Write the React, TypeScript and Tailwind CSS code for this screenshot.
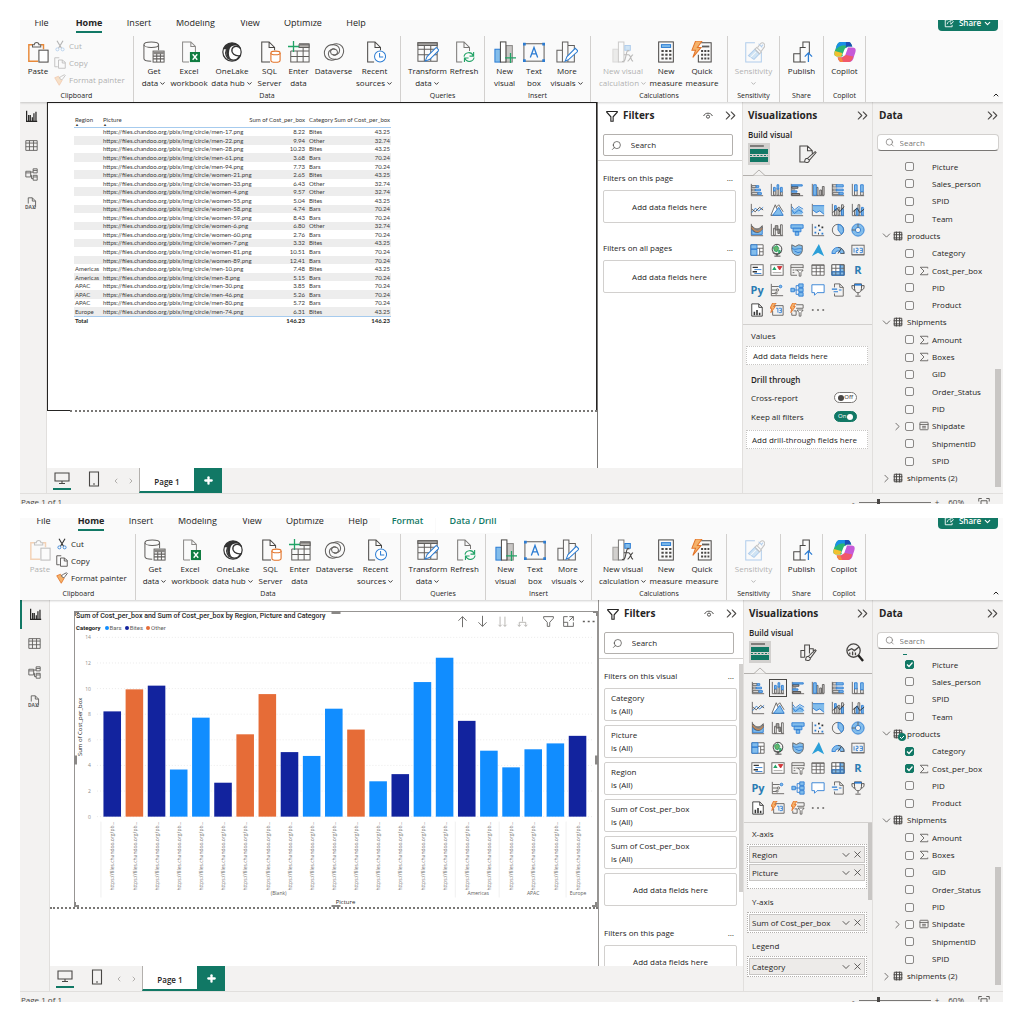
import React, { useState } from "react";
import { ChevronDown, ChevronRight, ChevronUp, ChevronsRight, Plus, Search, X } from "lucide-react";

const G = "#605e5c";
const B = "#2b7cd3";
const L = "#83bdeb";
const O = "#e8893a";
const N = "#21a366";

type IconProps = { children: React.ReactNode; className?: string; box?: number; sw?: number };
function Svg({ children, className = "size-[22px]", box = 24, sw = 1.1 }: IconProps) {
  return (
    <svg
      viewBox={`0 0 ${box} ${box}`}
      className={`block shrink-0 ${className}`}
      fill="none"
      stroke={G}
      strokeWidth={sw}
      aria-hidden="true"
    >
      {children}
    </svg>
  );
}

/* ---------- ribbon icons ---------- */

const ribbonIcons: Record<string, React.ReactNode> = {
  paste: (
    <>
      <path d="M7 4H2v18h10M15 4h3v5" stroke={O} strokeWidth="1.6" />
      <path d="M6 6.500V4h2c0-3 5-3 5 0h2v2.500z" fill="#fafafa" />
      <rect x="13" y="10" width="10" height="13" fill="#fff" stroke="#494745" />
    </>
  ),
  getData: (
    <>
      <ellipse cx="9" cy="4" rx="8" ry="3" />
      <path d="M1 4v15c0 2 4 3 8 3M17 4v6" />
      <rect x="11" y="11" width="12" height="12" fill="#fff" />
      <path d="M11 13h12" strokeWidth="3" stroke="#8a8886" />
      <path d="M11 16.500h12M11 19.500h12M15 14v9M19 14v9" />
    </>
  ),
  excel: (
    <>
      <path d="M5 23V1h9l5 5v6M14 1v5h5M5 23h7" stroke="#8a8886" />
      <rect x="13" y="12" width="11" height="11" fill="#107c41" stroke="none" />
      <path d="M16 14.500l5 6M21 14.500l-5 6" stroke="#fff" strokeWidth="1.500" />
    </>
  ),
  onelake: (
    <>
      <circle cx="12" cy="12" r="10" fill="#fff" stroke="#333" strokeWidth="1.300" />
      <path d="M2.500 9C5 1 17 0 20 6c-5-2-10-1-11 4-1 5 0 8 2 10C6 19 5 13 6 9z" fill="#333" stroke="none" />
      <path d="M21 8c-2-3-8-3-9 1-1 4 3 8 9 7M6 9c-2 5 0 10 4 11 4 2 8 0 10-3" stroke="#333" strokeWidth="1.400" />
    </>
  ),
  sql: (
    <>
      <path d="M12 23H3V1h8l6 6v3M11 1v6h6" stroke="#494745" />
      <path d="M13 13v8c0 3 10 3 10 0v-8" fill="#fff" stroke="#e3742a" strokeWidth="1.200" />
      <ellipse cx="18" cy="13" rx="5" ry="2" fill="#fff" stroke="#e3742a" strokeWidth="1.200" />
    </>
  ),
  enter: (
    <>
      <path d="M12 3h11v20H3V11M3 11h20M3 17h20M10 11v12M16.500 4v19" />
      <path d="M12 4h11v3H12z" fill="#b3b0ad" />
      <path d="M6 0v12M0 6h12" stroke={N} strokeWidth="1.400" />
    </>
  ),
  dataverse: (
    <>
      <path d="M14 20C4 24-1 15 3 8 7 2 17 3 18 9c1 5-5 8-9 5-2-3 1-7 4-5" />
      <path d="M10 4c10-4 15 5 11 12-4 6-14 5-15-1-1-5 5-8 9-5 2 3-1 7-4 5" />
    </>
  ),
  recent: (
    <>
      <path d="M11 23H4V1h8l6 6v3M12 1v6h6" stroke="#494745" />
      <circle cx="17.500" cy="17" r="6" stroke={B} fill="#fff" />
      <path d="M17 13v4.500h4" stroke={B} />
    </>
  ),
  transform: (
    <>
      <path d="M1 2h21v20H1zM1 9h21M1 15h21M8 5v17M15 5v17" />
      <path d="M1 2h21v3H1z" fill="#a19f9d" />
      <path d="M9 22l2-5L21 7l3 3-10 10z" fill="#fff" stroke={B} />
    </>
  ),
  refresh: (
    <>
      <path d="M10 23H4V1h8l6 6v4M12 1v6h6" stroke="#797775" />
      <path d="M12 17c1-5 8-6 10-1M22.500 12v4.500H18M23 18c-1 5-8 6-10 1M12.500 23v-4.500H17" stroke={N} strokeWidth="1.200" />
    </>
  ),
  newVisual: (
    <>
      <rect x="1" y="9" width="6" height="14" fill={L} stroke={B} />
      <rect x="13" y="5" width="7" height="18" fill="#c8c6c4" stroke="#8a8886" />
      <rect x="7" y="1" width="6" height="22" fill="#fff" stroke="#494745" />
      <path d="M18 13v11M12 18.500h12" stroke={N} strokeWidth="1.400" />
    </>
  ),
  textBox: (
    <>
      <rect x="1" y="3" width="22" height="19" />
      <path d="M0 2h3v3H0zM21 2h3v3h-3zM0 20h3v3H0zM21 20h3v3h-3z" fill={B} stroke="none" />
      <path d="M8 18l4-11 4 11M9.500 14h5" stroke={B} strokeWidth="1.400" />
    </>
  ),
  moreVisuals: (
    <>
      <path d="M1 10h6v13H1zM7 1h6v22H7zM13 5h7v18h-7" />
      <path d="M10 22l2-5L21 8l3 3-10 9z" fill="#fff" stroke={B} />
    </>
  ),
  calc: (
    <>
      <path d="M1 9h6v14H1z" fill="#d2d0ce" stroke="#a19f9d" />
      <path d="M7 1h6v22H7z" fill="#fff" stroke="#797775" />
      <path d="M14 5h6v5h-6z" fill={L} stroke={B} />
      <path d="M19 11c-3-2-3 2-4 6-1 5-2 6-4 5M13 15h5M18 15c3 0 2 7 5 7M23 15c-2 0-4 7-6 7" stroke="#494745" strokeWidth="1.200" />
    </>
  ),
  measure: (
    <>
      <rect x="4" y="1" width="16" height="22" stroke="#494745" />
      <rect x="7" y="4" width="10" height="3" fill={L} stroke={B} />
      <path d="M7 11h11M7 15h11M7 19h11" strokeDasharray="2.500 1.700" strokeWidth="2.200" stroke="#494745" />
    </>
  ),
  quick: (
    <>
      <path d="M11 2h11v21H8v-8" stroke="#494745" />
      <path d="M12 6h8" strokeWidth="2" />
      <path d="M11 11h9M11 15h9M11 19h9" strokeDasharray="2.200 1.300" strokeWidth="2.200" stroke="#494745" />
      <path d="M5 0L1 10h4l-3 8 9-11H7l5-7z" fill="#f5b26a" stroke="#e3742a" />
    </>
  ),
  sensitivity: (
    <>
      <path d="M13 2H3v21h17V12" stroke={B} />
      <path d="M6 16l7-7 5 5-6 6z" fill={L} stroke={B} />
      <path d="M8 18l6-6" stroke="#fff" />
      <path d="M13 9l5 5 2-2-5-5zM16 7l3-4c3-3 6 1 4 4l-3 4" stroke={G} />
      <path d="M17 3l4 4M20 6l2-2" stroke={B} />
    </>
  ),
  publish: (
    <>
      <path d="M3 23V14h7v9zM10 14V7h6M10 7h3V1h7v13M10 23h6" stroke="#494745" />
      <path d="M19 23V13M15 17l4-4 4 4" stroke={B} strokeWidth="1.400" />
    </>
  ),
  copilot: (
    <g stroke="none">
      <path d="M8 1h8c2 0 3 2 4 5h-4c-2 0-3 1-4 4l-3 7H4c-5 0-4-4-2-9C3 3 5 1 8 1z" fill="#2bb673" />
      <path d="M8 1h7c2 0 3 2 3 4H9C5 6 4 8 2 9 3 3 5 1 8 1z" fill="#1a8fe8" />
      <path d="M13 1h3c2 0 3 2 4 5h-4c-1 0-2 0-3 2z" fill="#1d4fb8" />
      <path d="M4 17c-4 0-4-3-3-6l8 2-1 4z" fill="#f2c12e" />
      <path d="M16 23H8c-2 0-3-2-4-5h4c2 0 3-1 4-4l3-7h5c5 0 4 4 2 9-1 5-3 7-6 7z" fill="#c65ad8" />
      <path d="M16 23H8c-2 0-3-2-4-5h4c2 0 3-1 4-3l9 2c-1 4-3 6-5 6z" fill="#f1586a" />
      <path d="M10 23H8c-2 0-3-2-4-5h4z" fill="#f58a3c" />
      <path d="M9 15l3-7h3l-3 8z" fill="#fff" />
    </g>
  ),
};

type Btn = { icon: string; lines: string[]; menu?: boolean; w: string; off?: boolean };
type Group = { name: string; w: string; items: Btn[] };

function RibbonButton({ icon, lines, menu, w, off }: Btn) {
  return (
    <button type="button" disabled={off} className={`flex shrink-0 flex-col items-center ${w} ${off ? "opacity-35" : ""}`}>
      <Svg>{ribbonIcons[icon]}</Svg>
      <span className="mt-[2px] flex flex-col items-center text-[8px] leading-[12px] whitespace-nowrap">
        {lines.map((line, i) => (
          <span key={i} className="flex items-center">
            {line}
            {menu && i === lines.length - 1 && (
              <ChevronDown className={`size-[7px] ${line ? "ml-px" : "mt-[3px]"}`} strokeWidth={3} />
            )}
          </span>
        ))}
      </span>
    </button>
  );
}

function ribbonGroups(selected: boolean): Group[] {
  return [
    {
      name: "Data",
      w: selected ? "w-[265px]" : "w-[267px]",
      items: [
        { icon: "getData", lines: ["Get", "data"], menu: true, w: "w-[32px]" },
        { icon: "excel", lines: ["Excel", "workbook"], w: "w-[38px]" },
        { icon: "onelake", lines: ["OneLake", "data hub"], menu: true, w: "w-[48px]" },
        { icon: "sql", lines: ["SQL", "Server"], w: "w-[27px]" },
        { icon: "enter", lines: ["Enter", "data"], w: "w-[31px]" },
        { icon: "dataverse", lines: ["Dataverse"], w: "w-[39px]" },
        { icon: "recent", lines: ["Recent", "sources"], menu: true, w: "w-[43px]" },
      ],
    },
    {
      name: "Queries",
      w: selected ? "w-[85px]" : "w-[84px]",
      items: [
        { icon: "transform", lines: ["Transform", "data"], menu: true, w: "w-[43px]" },
        { icon: "refresh", lines: ["Refresh"], w: "w-[30px]" },
      ],
    },
    {
      name: "Insert",
      w: "w-[106px]",
      items: [
        { icon: "newVisual", lines: ["New", "visual"], w: "w-[30px]" },
        { icon: "textBox", lines: ["Text", "box"], w: "w-[29px]" },
        { icon: "moreVisuals", lines: ["More", "visuals"], menu: true, w: "w-[37px]" },
      ],
    },
    {
      name: "Calculations",
      w: selected ? "w-[135px]" : "w-[137px]",
      items: [
        { icon: "calc", lines: ["New visual", "calculation"], menu: true, w: "w-[50px]", off: !selected },
        { icon: "measure", lines: ["New", "measure"], w: "w-[36px]" },
        { icon: "quick", lines: ["Quick", "measure"], w: "w-[36px]" },
      ],
    },
    {
      name: "Sensitivity",
      w: selected ? "w-[54px]" : "w-[52px]",
      items: [{ icon: "sensitivity", lines: ["Sensitivity", ""], menu: true, w: "w-[48px]", off: true }],
    },
    { name: "Share", w: selected ? "w-[42px]" : "w-[44px]", items: [{ icon: "publish", lines: ["Publish"], w: "w-[40px]" }] },
    { name: "Copilot", w: selected ? "w-[43px]" : "w-[42px]", items: [{ icon: "copilot", lines: ["Copilot"], w: "w-[40px]" }] },
  ];
}

const tabs = [
  { name: "File", w: "w-[43px]" },
  { name: "Home", w: "w-[52px]" },
  { name: "Insert", w: "w-[48px]" },
  { name: "Modeling", w: "w-[65px]" },
  { name: "View", w: "w-[44px]" },
  { name: "Optimize", w: "w-[62px]" },
  { name: "Help", w: "w-[44px]" },
];
const contextTabs = [
  { name: "Format", w: "w-[55px]" },
  { name: "Data / Drill", w: "w-[74px]" },
];

function TabStrip({ selected }: { selected: boolean }) {
  return (
    <div className={`flex h-4 overflow-hidden ${selected ? "pl-[2px]" : ""}`}>
      {tabs.map((t) => (
        <button key={t.name} type="button" className={`-mt-[5px] flex h-[18px] justify-center text-[9px] leading-[15px] ${t.w}`}>
          <span className={t.name === "Home" ? "border-b-2 border-[#117865] font-bold" : ""}>{t.name}</span>
        </button>
      ))}
      {selected &&
        contextTabs.map((t) => (
          <button
            key={t.name}
            type="button"
            className={`mr-px flex h-[15px] justify-center bg-white text-[9px] font-semibold text-[#117865] ${t.w}`}
          >
            <span className="-mt-[5px] leading-[15px]">{t.name}</span>
          </button>
        ))}
      <div className="flex-1" />
      <button
        type="button"
        className="mr-[5px] flex h-[11px] w-[60px] items-center justify-center gap-[5px] rounded-b-sm bg-[#117865] text-[8px] font-semibold text-white"
      >
        <Svg box={16} className="-mt-[6px] size-[10px]" sw={1.4}>
          <path d="M6 3H2v11h11v-3M5 10c1-4 3-5 6-5V2l4 4-4 4V7" stroke="#fff" />
        </Svg>
        <span className="-mt-[5px] leading-[12px]">Share</span>
        <ChevronDown className="-mt-[4px] -ml-[3px] size-[9px]" strokeWidth={3} />
      </button>
    </div>
  );
}

function Clipboard({ selected }: { selected: boolean }) {
  const off = selected ? "" : "opacity-35";
  return (
    <div className={`flex shrink-0 flex-col border-r border-[#d2d0ce] ${selected ? "w-[116px] pl-[2px]" : "w-[114px]"}`}>
      <div className="flex h-[55px] pl-[2px]">
        <button type="button" className={`flex w-[32px] flex-col items-center pt-[5px] ${selected ? "opacity-35" : ""}`}>
          <Svg>{ribbonIcons.paste}</Svg>
          <span className="mt-[2px] text-[8px] leading-[12px]">Paste</span>
        </button>
        <div className={`flex flex-col pt-px text-[8px] leading-[17px] whitespace-nowrap ${off}`}>
          <button type="button" className="flex items-center gap-[3px]">
            <Svg box={16} className="size-[12px]">
              <path d="M4 1l6 10M12 1L6 11" stroke="#333" strokeWidth="1.500" />
              <circle cx="4.500" cy="12.500" r="2" stroke={B} />
              <circle cx="11.500" cy="12.500" r="2" stroke={B} />
            </Svg>
            Cut
          </button>
          <button type="button" className="flex items-center gap-[3px]">
            <Svg box={16} className="size-[12px]">
              <path d="M5 13H1V1h6M6 4h5l4 3v8H6zM11 4v4h4" stroke="#494745" />
            </Svg>
            Copy
          </button>
          <button type="button" className="flex items-center gap-[3px]">
            <Svg box={16} className="size-[12px]">
              <path d="M1 5l5-2 5 5-4 7z" fill="#f5b26a" stroke="#e3742a" />
              <path d="M7 5l3-2 4-2 1 1-3 4-2 2z" fill="#fff" stroke="#494745" />
            </Svg>
            Format painter
          </button>
        </div>
      </div>
      <div className="pt-px text-center text-[7px] leading-[12px]">Clipboard</div>
    </div>
  );
}

function Ribbon({ selected }: { selected: boolean }) {
  return (
    <header className="relative z-10 bg-[#fafafa] shadow-[0_1px_2px_#00000030]">
      <TabStrip selected={selected} />
      <div className="flex h-[66px]">
        <Clipboard selected={selected} />
        {ribbonGroups(selected).map((g) => (
          <div key={g.name} className={`flex shrink-0 flex-col border-r border-[#d2d0ce] ${g.w}`}>
            <div className="flex h-[55px] justify-center pt-[5px]">
              {g.items.map((b) => (
                <RibbonButton key={b.icon} {...b} />
              ))}
            </div>
            <div className="pt-px text-center text-[7px] leading-[12px]">{g.name}</div>
          </div>
        ))}
        <div className="flex flex-1 items-end justify-end pr-[3px] pb-[3px]">
          <button type="button" aria-label="Collapse ribbon">
            <ChevronUp className="size-[8px]" strokeWidth={3} />
          </button>
        </div>
      </div>
    </header>
  );
}

/* ---------- left rail ---------- */

function Rail({ selected }: { selected: boolean }) {
  const icon = "size-[13px]";
  return (
    <nav className={`flex shrink-0 flex-col border-r border-[#e1dfdd] bg-[#f3f2f1] ${selected ? "w-[30px]" : "w-[27px]"}`}>
      <button
        type="button"
        aria-label="Report view"
        className={`flex h-[29px] items-center justify-center ${selected ? "border-l-2 border-[#117865]" : "pr-[3px]"}`}
      >
        <Svg box={16} className={icon} sw={1.5}>
          <path d="M2 1v13h13M4.500 6v8M6.500 6v8M9 9v5M11 4v10M13.500 2v12" stroke="#252423" />
        </Svg>
      </button>
      <button type="button" aria-label="Table view" className={`flex h-[29px] items-center justify-center ${selected ? "" : "pr-[3px]"}`}>
        <Svg box={16} className={icon}>
          <path d="M1 2h14v12H1zM1 5h14M1 9.500h14M5.500 2v12M10.500 2v12" />
        </Svg>
      </button>
      <button type="button" aria-label="Model view" className={`flex h-[29px] items-center justify-center ${selected ? "" : "pr-[3px]"}`}>
        <Svg box={16} className={icon}>
          <path d="M1 4h6v7H1zM1 6h6M10 1h5v5h-5zM10 3h5M10 9h5v6h-5zM10 11h5M7 5h3M7 9h1v4h2" />
        </Svg>
      </button>
      <button type="button" aria-label="DAX query view" className={`flex h-[29px] items-center justify-center ${selected ? "" : "pr-[3px]"}`}>
        <Svg box={16} className={icon}>
          <path d="M4 8V1h5l4 4v8M9 1v4h4M10 14h3" />
          <text x="0" y="14.500" fontSize="6" fontWeight="bold" fill={G} stroke="none">
            DAX
          </text>
        </Svg>
      </button>
    </nav>
  );
}

/* ---------- report data ---------- */

type Row = [region: string, file: string, cost: number, category: "Bites" | "Bars" | "Other"];
const rows: Row[] = [
  ["", "men-17", 8.22, "Bites"],
  ["", "men-22", 9.94, "Other"],
  ["", "men-28", 10.23, "Bites"],
  ["", "men-61", 3.68, "Bars"],
  ["", "men-94", 7.73, "Bars"],
  ["", "women-21", 2.65, "Bites"],
  ["", "women-33", 6.43, "Other"],
  ["", "women-4", 9.57, "Other"],
  ["", "women-55", 5.04, "Bites"],
  ["", "women-58", 4.74, "Bars"],
  ["", "women-59", 8.43, "Bars"],
  ["", "women-6", 6.8, "Other"],
  ["", "women-60", 2.76, "Bars"],
  ["", "women-7", 3.32, "Bites"],
  ["", "women-81", 10.51, "Bars"],
  ["", "women-89", 12.41, "Bars"],
  ["Americas", "men-10", 7.48, "Bites"],
  ["Americas", "men-8", 5.15, "Bars"],
  ["APAC", "men-30", 3.85, "Bars"],
  ["APAC", "men-46", 5.26, "Bars"],
  ["APAC", "men-80", 5.72, "Bars"],
  ["Europe", "men-74", 6.31, "Bites"],
];
const totals = { Bites: "43.25", Bars: "70.24", Other: "32.74" };
const colors = { Bars: "#118dff", Bites: "#12239e", Other: "#e66c37" };

function TableCanvas() {
  return (
    <div className="flex-1 bg-white">
      <div className="h-[308px] border border-[#252423] border-b-0 pt-[12px] pl-[26px]">
        <table className="h-[209px] w-[317px] table-fixed border-collapse font-[Lato,sans-serif] text-[6px] leading-[7px] whitespace-nowrap text-[#3b3a39]">
          <colgroup>
            <col className="w-[28px]" />
            <col className="w-[146px]" />
            <col className="w-[58px]" />
            <col className="w-[27px]" />
            <col className="w-[58px]" />
          </colgroup>
          <thead>
            <tr className="h-[12px] border-b border-[#a6cbee] align-top">
              <th className="px-px pt-px text-left font-normal">
                Region
                <span className="block text-[4px] leading-[3px]">▲</span>
              </th>
              <th className="px-px pt-px text-left font-normal">
                Picture
                <span className="block text-[4px] leading-[3px]">▲</span>
              </th>
              <th className="px-px pt-px text-right font-normal">Sum of Cost_per_box</th>
              <th className="pt-px pl-[3px] text-left font-normal">Category</th>
              <th className="px-px pt-px text-right font-normal">Sum of Cost_per_box</th>
            </tr>
          </thead>
          <tbody>
            {rows.map(([region, file, cost, category], i) => (
              <tr key={file} className={i % 2 ? "bg-[#ededed]" : ""}>
                <td className="px-px">{region}</td>
                <td className="px-px">{`https://files.chandoo.org/pbix/img/circle/${file}.png`}</td>
                <td className="px-px text-right">{cost.toFixed(2)}</td>
                <td className="pl-[3px]">{category}</td>
                <td className="px-px text-right">{totals[category]}</td>
              </tr>
            ))}
          </tbody>
          <tfoot>
            <tr className="border-t border-[#a6cbee] font-bold text-[#252423]">
              <td className="px-px">Total</td>
              <td />
              <td className="px-px text-right">146.23</td>
              <td />
              <td className="px-px text-right">146.23</td>
            </tr>
          </tfoot>
        </table>
      </div>
      <div className="flex">
        <div className="w-[23px] border-t border-[#252423]" />
        <div className="flex-1 border-t-2 border-dotted border-[#797775]" />
      </div>
    </div>
  );
}

function BarChart() {
  const base = 185;
  const unit = 12.83;
  const x = (i: number) => 28.5 + i * 22.2;
  return (
    <svg viewBox="0 0 523 276" className="block w-full" fontFamily="'Open Sans', sans-serif" fontSize="5" fill={G}>
      {[0, 2, 4, 6, 8, 10, 12, 14].map((v) => (
        <g key={v}>
          <text x="16" y={base - v * unit + 2} textAnchor="end" fill="#8a8886">
            {v}
          </text>
          <line x1="22" x2="518" y1={base - v * unit} y2={base - v * unit} stroke="#e6e6e6" strokeWidth="0.8" strokeDasharray="1 2" />
        </g>
      ))}
      <text transform="rotate(-90)" x={-95} y="7" textAnchor="middle" fontSize="6" fill="#252423">
        Sum of Cost_per_box
      </text>
      {[26, 381, 425, 492].map((lx) => (
        <line key={lx} x1={lx} x2={lx} y1="190" y2="266" stroke="#ececec" strokeWidth="0.8" />
      ))}
      {rows.map(([, file, cost, category], i) => (
        <g key={file}>
          <rect x={x(i)} y={base - cost * unit} width="17.6" height={cost * unit} fill={colors[category]} />
          <text transform={`translate(${x(i) + 11} 190) rotate(-90)`} textAnchor="end" fill="#797775">
            https://files.chandoo.org/pb…
          </text>
        </g>
      ))}
      <g textAnchor="middle">
        <text x="204" y="264">(Blank)</text>
        <text x="404" y="264">Americas</text>
        <text x="459" y="264">APAC</text>
        <text x="504" y="264">Europe</text>
        <text x="271" y="273" fontSize="6" fill="#252423">Picture</text>
      </g>
    </svg>
  );
}

const handle = "absolute border-[#8a8886]";

function ChartCanvas() {
  const tool = "size-[13px]";
  return (
    <div className="flex-1 bg-white pt-[11px]">
      <div className="relative ml-[24px] border border-[#979593] border-b-0">
        <span className={`${handle} -top-px -left-px size-[5px] border-t-2 border-l-2`} />
        <span className={`${handle} -top-px -right-px size-[5px] border-t-2 border-r-2`} />
        <span className={`${handle} -top-px left-1/2 w-[9px] -translate-x-1/2 border-t-3`} />
        <span className={`${handle} bottom-0 left-1/2 w-[9px] -translate-x-1/2 border-t-2`} />
        <span className={`${handle} top-1/2 -left-px h-[9px] -translate-y-1/2 border-l-3`} />
        <span className={`${handle} top-1/2 -right-px h-[9px] -translate-y-1/2 border-l-3`} />
        <span className={`${handle} bottom-0 -left-px size-[5px] border-b-2 border-l-2`} />
        <span className={`${handle} right-0 bottom-0 size-[5px] border-r-2 border-b-2`} />
        <div className="flex h-[20px] justify-between">
          <div className="pl-px font-[Roboto,sans-serif] whitespace-nowrap">
            <h2 className="text-[7px] leading-[9px] font-medium">
              Sum of Cost_per_box and Sum of Cost_per_box by Region, Picture and Category
            </h2>
            <div className="mt-[3px] flex items-center gap-[3px] text-[6px] leading-[7px] text-[#605e5c]">
              <b className="mr-px text-[#252423]">Category</b>
              {(["Bars", "Bites", "Other"] as const).map((c) => (
                <span key={c} className="flex items-center gap-px">
                  <svg viewBox="0 0 4 4" className="size-[4px]" aria-hidden="true">
                    <circle cx="2" cy="2" r="2" fill={colors[c]} />
                  </svg>
                  {c}
                </span>
              ))}
            </div>
          </div>
          <div className="flex items-center gap-[7px] pr-[2px] pb-[2px]">
            <button type="button" aria-label="Drill up">
              <Svg box={16} className={tool}><path d="M8 15V2M3 7l5-5 5 5" /></Svg>
            </button>
            <button type="button" aria-label="Drill down">
              <Svg box={16} className={tool}><path d="M8 1v13M3 9l5 5 5-5" /></Svg>
            </button>
            <button type="button" aria-label="Next level">
              <Svg box={16} className={tool}><path d="M5 2v12M3 12l2 2 2-2M11 2v12M9 12l2 2 2-2" stroke="#b3b0ad" /></Svg>
            </button>
            <button type="button" aria-label="Expand level">
              <Svg box={16} className={tool}><path d="M8 2v6M4 14V9h8v5M2 12l2 2 2-2M10 12l2 2 2-2" stroke="#b3b0ad" /></Svg>
            </button>
            <button type="button" aria-label="Filters" className="ml-[6px]">
              <Svg box={16} className={tool}><path d="M2 2h12v2L9.500 9v5h-3V9L2 4z" /></Svg>
            </button>
            <button type="button" aria-label="Focus mode">
              <Svg box={16} className={tool}><path d="M7 2H2v12h12V9M9 2h5v5M14 2L9 7M2 9h5v5" /></Svg>
            </button>
            <button type="button" aria-label="More options">
              <Svg box={16} className={tool}><path d="M1 8h2.500M7 8h2.500M13 8h2.500" strokeWidth="2" /></Svg>
            </button>
          </div>
        </div>
        <BarChart />
      </div>
      <div className="border-t-2 border-dotted border-[#797775]" />
    </div>
  );
}

/* ---------- filters ---------- */

function Expand({ label }: { label: string }) {
  return (
    <button type="button" aria-label={label}>
      <ChevronsRight className="size-[17px] text-[#494745]" strokeWidth={1.5} />
    </button>
  );
}

function DropBox() {
  return (
    <div className="flex h-[33px] shrink-0 items-center justify-center rounded-xs border border-[#d2d0ce] bg-white text-[8px]">
      Add data fields here
    </div>
  );
}

function SectionHead({ children }: { children: React.ReactNode }) {
  return (
    <div className="flex h-[14px] shrink-0 items-center justify-between pr-[3px] text-[8px]">
      <span>{children}</span>
      <span>…</span>
    </div>
  );
}

const visualFilters = ["Category", "Picture", "Region", "Sum of Cost_per_box", "Sum of Cost_per_box"];

function Filters({ selected }: { selected: boolean }) {
  return (
    <section
      className={`flex w-[145px] shrink-0 flex-col overflow-hidden border-l bg-white ${selected ? "border-[#979593]" : "border-[#797775]"}`}
    >
      <div className="flex h-[27px] shrink-0 items-center pr-[3px] pl-[8px]">
        <Svg box={16} className="size-[12px]" sw={1.5}>
          <path d="M1 2h14v1L9.500 9v6h-3V9L1 3z" stroke="#252423" />
        </Svg>
        <h2 className="ml-[5px] flex-1 text-[10px] font-bold">Filters</h2>
        <Svg box={16} className="mr-[9px] size-[10px]" sw={1.5}>
          <path d="M1 8c2-6 12-6 14 0" stroke="#494745" />
          <circle cx="8" cy="9" r="2.500" stroke="#494745" />
        </Svg>
        <Expand label="Collapse filters" />
      </div>
      <div className="shrink-0 border-b border-[#d2d0ce] pt-[5px] pr-[9px] pb-[4px] pl-[5px]">
        <label className="flex h-[22px] items-center rounded-xs border border-[#b3b0ad] px-[7px]">
          <Search className="size-[13px] -scale-x-100 text-[#494745]" strokeWidth={1.6} />
          <input aria-label="Search filters" placeholder="Search" className="ml-[9px] w-full min-w-0 text-[8px] outline-none placeholder:text-[#252423]" />
        </label>
      </div>
      <div className="flex h-0 grow overflow-hidden">
        <div className="flex flex-1 flex-col pt-[10px] pl-[5px]">
          {selected ? (
            <>
              <SectionHead>Filters on this visual</SectionHead>
              <div className="mt-[5px] flex flex-col gap-1">
                {visualFilters.map((f, i) => (
                  <div key={i} className="h-[33px] shrink-0 rounded-xs border border-[#d2d0ce] px-[6px] py-[2px] text-[8px] leading-[13px]">
                    <div>{f}</div>
                    <div>is (All)</div>
                  </div>
                ))}
                <DropBox />
              </div>
              <div className="mt-[20px]">
                <SectionHead>Filters on this page</SectionHead>
              </div>
              <div className="mt-[5px]">
                <DropBox />
              </div>
            </>
          ) : (
            <>
              <SectionHead>Filters on this page</SectionHead>
              <div className="mt-[5px]">
                <DropBox />
              </div>
              <div className="mt-[18px]">
                <SectionHead>Filters on all pages</SectionHead>
              </div>
              <div className="mt-[5px]">
                <DropBox />
              </div>
            </>
          )}
        </div>
        <div className="w-[6px] shrink-0 pt-[5px]">
          {selected && <div className="ml-[2px] h-[228px] bg-[#d2d0ce]" />}
        </div>
      </div>
    </section>
  );
}

/* ---------- visualizations ---------- */

const axis = <path d="M1.500 1v13.500H15" />;
const vizIcons: [string, React.ReactNode][] = [
  ["Stacked bar chart", <>{axis}<path d="M2 3h5v2H2zM2 7h4v2H2zM2 11h7v2H2z" /><path d="M7 3h3v2H7zM6 7h6v2H6zM9 11h4v2H9z" fill={L} stroke={B} /></>],
  ["Stacked column chart", <>{axis}<path d="M4 9h2v5H4zM8 6h2v8H8zM12 10h2v4h-2z" /><path d="M4 5h2v4H4zM8 2h2v5H8zM12 5h2v5h-2z" fill={L} stroke={B} /></>],
  ["Clustered bar chart", <>{axis}<path d="M2 4h7v2H2zM2 8h4M2 12h9v2H2z" fill="#a19f9d" stroke="#494745" /><path d="M2 2h12v1.500H2zM2 9h6v1.500H2z" fill={L} stroke={B} /></>],
  ["Clustered column chart", <>{axis}<path d="M6 5h2v9H6zM13 4h2v10h-2zM10 8h2v6h-2z" fill="#c8c6c4" /><path d="M3 2h3v12H3z" fill={L} stroke={B} /></>],
  ["100% stacked bar chart", <>{axis}<path d="M2 2h5v2.500H2zM2 7h5v2H2zM2 11h8v2H2z" /><path d="M6 2h8v2.500H6zM6 7h8v2H6zM9 11h5v2H9z" fill={L} stroke={B} /></>],
  ["100% stacked column chart", <>{axis}<path d="M4 8h3v6H4zM11 10h3v4h-3z" /><path d="M4 2h3v7H4z" fill={L} stroke={B} /><path d="M11 2h3v8h-3z" fill={L} stroke={B} /></>],
  ["Line chart", <>{axis}<path d="M2 11l4-5 4 3 5-4" stroke={B} /><path d="M2 7l4 3 5-5 4 3" stroke="#494745" /></>],
  ["Area chart", <><path d="M1 14h14" /><path d="M1 14L6 2l5 12z" fill="#fff" /><path d="M3 14l7-9 5 9z" fill={L} stroke={B} /><path d="M7 5l3-3 5 8" /></>],
  ["Stacked area chart", <>{axis}<path d="M2 6l3 3 5-4 4 3v5H2z" fill={L} stroke="none" /><path d="M2 4l3 4 5-4 5 3M2 8l3 4 5-4 5 3" stroke={B} /></>],
  ["100% stacked area chart", <>{axis}<path d="M2 3h13v10l-5-4-4 2-4-3z" fill={L} stroke="none" /><path d="M2 3h13M2 8l4 3 4-2 5 4" stroke={B} /></>],
  ["Line and stacked column chart", <>{axis}<path d="M4 8h2v6H4zM8 5h2v9H8zM12 2h2v12h-2z" /><path d="M4 3h2v5H4zM12 7h2v7h-2z" fill={L} stroke={B} /><path d="M2 11l5-5 3 4 5-6" stroke="#333" /></>],
  ["Line and clustered column chart", <>{axis}<path d="M4 8h2v6H4zM8 2h2v12H8z" /><path d="M6 6h2v8H6zM12 5h2v9h-2z" fill={L} stroke={B} /><path d="M2 10l5-4 3 5 5-4" stroke="#333" /></>],
  ["Ribbon chart", <>{axis}<path d="M2 8c4 4 7 4 12-3v8H2z" fill={L} stroke={B} /><path d="M2 3c4 5 8 5 12 0v4c-4 6-9 4-12 0z" fill="#8a8886" /><path d="M2 5c4 6 9 6 12 1" stroke={O} /></>],
  ["Waterfall chart", <>{axis}<path d="M4 6h2v8H4zM12 2h2v12h-2z" /><path d="M6 3h3v5H6zM9 7h2v5H9z" fill="#a19f9d" /></>],
  ["Funnel chart", <><path d="M1 2h14v4H1z" fill={L} stroke={B} /><path d="M3.500 6h9v4h-9zM6 10h4v4H6z" fill={L} stroke={B} /></>],
  ["Scatter chart", <>{axis}<path d="M4 5h2M4 11h2M9 8h2M12 12h2" stroke={B} strokeWidth="2" /><path d="M8 3h2M12 5h2M8 12h1" stroke="#333" strokeWidth="2" /></>],
  ["Pie chart", <><circle cx="8" cy="8" r="6.500" /><path d="M8 1.500a6.500 6.500 0 0 1 4 11.500L8 8z" fill={L} stroke={B} /></>],
  ["Donut chart", <><circle cx="8" cy="8" r="5" stroke={L} strokeWidth="4" /><circle cx="8" cy="8" r="7" stroke={B} /><circle cx="8" cy="8" r="3" stroke={B} /><path d="M1 8h4M8 1v4" /></>],
  ["Treemap", <><path d="M1 2h14v12H1z" fill="#fff" /><path d="M1 2h7v5H1zM1 7h7v7H1z" fill={L} stroke={B} /><path d="M8 6h7M11 6v8M11 10h4" /></>],
  ["Map", <><circle cx="8" cy="7" r="5.500" stroke="#333" /><path d="M4 5l4-2 2 3-2 4-3-1zM10 8l2 1-2 3z" fill="#6bb36b" stroke={N} /><path d="M5 15h7M8 12.500V15M3 11c2 2 8 3 10-1" stroke="#333" /></>],
  ["Filled map", <><path d="M2 2l4 2 4-2 4 1v6c-1 4-4 6-7 5-4-1-5-5-5-7z" fill={L} stroke={G} /><path d="M2 6c4 3 8-1 12 1M5 9l4 2 4-1" stroke={B} /></>],
  ["Azure map", <path d="M9 1l6 14-7-4-7 4z" fill="#2b9fd8" stroke="none" />],
  ["Gauge", <><path d="M1 12a7 7 0 0 1 14 0h-4a3 3 0 0 0-6 0z" fill={L} stroke={B} /><path d="M8 12l4-6" stroke="#333" /><path d="M8 5a7 7 0 0 1 7 7h-4" /></>],
  ["Card", <><rect x="1" y="2.500" width="14" height="11" /><path d="M3.500 6v5M5.500 6h2.500v2.500H6V11h2M10 6h3v5h-3M10.500 8.500H13" stroke={B} /><path d="M1 13.500h14" /></>],
  ["Multi-row card", <><rect x="1" y="2" width="14" height="12" fill="#fff" /><path d="M3 5h6M3 10h5" stroke="#333" strokeWidth="1.500" /><path d="M5 7.500h8M5 12h8" stroke={B} /></>],
  ["KPI", <><rect x="1" y="2" width="14" height="12" fill="#fff" /><path d="M2.500 8L5 4l2.500 4z" fill={N} stroke="none" /><path d="M8.500 4h5L11 8z" fill="#d13438" stroke="#d13438" /><path d="M3 11h10" stroke="#a19f9d" /></>],
  ["Slicer", <><path d="M8 14H1V2h14v4M1 5h14M3 8h2M3 11h2M6 8h2" /><path d="M8 8h7l-2.500 3v4h-2v-4z" fill="#fff" /></>],
  ["Table", <path d="M1 2h14v12H1zM1 3h14M1 6h14M1 10h14M6 3v11M10.500 3v11" fill="#fff" />],
  ["Matrix", <><path d="M1 2h14v12H1z" fill={L} /><path d="M1 2h9v8H1z" fill="#fff" stroke="none" /><path d="M1 2h14v12H1zM1 6h14M1 10h14M5.500 2v12M10.500 2v12" /><path d="M10.500 2v12M1 10h14v4H1z" stroke={B} /></>],
  ["R script visual", "R"],
  ["Python visual", "Py"],
  ["Key influencers", <>{axis}<path d="M2 4h8M2 8h5M2 12h4" /><circle cx="12" cy="4" r="1.500" fill={L} stroke={B} /><circle cx="8.500" cy="8" r="1.300" /><circle cx="7" cy="11.500" r="1.200" /></>],
  ["Decomposition tree", <><path d="M5 8h5M7 8V3h3M7 8v5h3" stroke={B} /><path d="M1 6h4v4H1zM10 1h5v4h-5zM10 6h5v4h-5zM10 11h5v4h-5z" fill={L} stroke={B} /></>],
  ["Q&A", <path d="M1 2h14v9H7l-3 3v-3H1z" fill="#fff" stroke={B} />],
  ["Smart narrative", <><path d="M4 5V1h6l4 4v10H4v-3M10 1v4h4" /><path d="M1 7h6M3 10h5M9 8h3" stroke={B} strokeWidth="1.400" /></>],
  ["Goals", <><path d="M4 1h8v5c0 4-2 5-4 5s-4-1-4-5zM4 3H1c0 4 1 5 4 5M12 3h3c0 4-1 5-4 5M8 11v3M5 15h6" stroke="#494745" /><path d="M4 2h8" stroke={B} strokeWidth="2" /></>],
  ["Paginated report", <><path d="M2 1h8l4 4v10H2zM10 1v4h4" stroke="#333" fill="#fff" /><path d="M5 10v4M8 8v6M11 11v3" stroke="#333" strokeWidth="1.800" /></>],
  ["Card (new)", <><path d="M4 3h11v11H3V9" /><path d="M7 6h2v5M10 6h3v2.500h-2M13 8.500V11h-3" stroke={B} /><path d="M3 0L0 6h2l-1 5 5-7H4l3-4z" fill="#f5b26a" stroke="#e3742a" /></>],
  ["Slicer (new)", <><path d="M7 2h8v4H7M4 9h3v5H2v-3" /><path d="M8 8h7l-2.500 3v4h-2v-4z" fill="#fff" /><path d="M3 0L0 6h2l-1 5 5-7H4l3-4z" fill="#f5b26a" stroke="#e3742a" /></>],
  ["More visuals", <path d="M1 8h2M7 8h2M13 8h2" strokeWidth="1.800" />],
];

function VizTabs({ selected }: { selected: boolean }) {
  return (
    <div className="relative border-b border-[#b3b0ad]">
      <div className="flex h-[32px] items-start pl-[5px]">
        <button type="button" aria-label="Build visual" className="flex size-[22px] items-center justify-center bg-[#d2d0ce]">
          <Svg box={20} className="size-[20px]">
            <path d="M1 2h14" stroke="#494745" strokeWidth="1.200" />
            <path d="M1 5h18v5H1zM1 13h18v5H1z" fill="#117865" stroke="none" />
            <path d="M1 11.500h18" stroke="#117865" strokeDasharray="2 1.500" />
          </Svg>
        </button>
        <button type="button" aria-label="Format visual" className="ml-[26px] flex size-[22px] items-center justify-center">
          <Svg box={20} className="size-[19px]">
            {selected ? (
              <path d="M6 15H2V8h4v7M6 10V2h5v9M11 6h4v4M7 18c0-3 1-4 3-4l7-7 1 1-6 8c0 2-2 3-5 2zM10 14l2 2" stroke="#494745" />
            ) : (
              <path d="M7 18H2V1h8l5 5v3M10 1v5h5M7 18c0-3 1-4 3-4l8-7 1 1-7 8c0 2-2 3-5 2zM10 14l2 2" stroke="#494745" />
            )}
          </Svg>
        </button>
        {selected && (
          <button type="button" aria-label="Analytics" className="ml-[24px] flex size-[22px] items-center justify-center">
            <Svg box={20} className="size-[19px]" sw={1.4}>
              <circle cx="9" cy="8" r="7" stroke="#494745" />
              <path d="M5 12v-2M8 13V9M11 13v-3M3 8l4-2 3 2 5-4" stroke="#494745" />
              <path d="M14 13l5 6" stroke="#252423" strokeWidth="2.500" />
            </Svg>
          </button>
        )}
      </div>
      <svg viewBox="0 0 12 7" className="absolute -bottom-px left-[10px] h-[7px] w-[12px]" aria-hidden="true">
        <path d="M0 6.500L6 1l6 5.500z" fill="#f3f2f1" />
        <path d="M0 6.500L6 1l6 5.500" fill="none" stroke="#b3b0ad" />
      </svg>
    </div>
  );
}

function Pill({ children }: { children: React.ReactNode }) {
  return (
    <div className="flex h-[17px] items-center border border-[#c8c6c4] bg-[#edebe9] pr-px pl-[2px] text-[8px]">
      <span className="flex-1 truncate">{children}</span>
      <button type="button" aria-label="Field options">
        <ChevronDown className="size-[12px] text-[#494745]" strokeWidth={1.8} />
      </button>
      <button type="button" aria-label="Remove field">
        <X className="size-[11px] text-[#494745]" strokeWidth={1.8} />
      </button>
    </div>
  );
}

function Well({ title, fields, tail }: { title: string; fields: string[]; tail?: boolean }) {
  return (
    <div className="mb-[6px]">
      <h3 className="mb-[3px] pl-[5px] text-[8px] leading-[14px]">{title}</h3>
      <div className={`flex flex-col gap-px border border-dotted border-[#b3b0ad] bg-white px-px pt-px ${tail ? "pb-[7px]" : "pb-px"}`}>
        {fields.map((f) => (
          <Pill key={f}>{f}</Pill>
        ))}
      </div>
    </div>
  );
}

function Toggle({ label, initial }: { label: string; initial: boolean }) {
  const [on, setOn] = useState(initial);
  return (
    <label className="relative flex h-[19px] items-center justify-between pr-[11px] pl-[5px] text-[8px]">
      {label}
      <input type="checkbox" role="switch" checked={on} onChange={(e) => setOn(e.target.checked)} className="sr-only" />
      <span
        className={`flex h-[11px] w-[23px] items-center justify-between rounded-full border px-[3px] text-[6px] ${
          on ? "flex-row-reverse border-[#117865] bg-[#117865] text-white" : "border-[#797775] bg-white"
        }`}
      >
        <span className={`size-[6px] rounded-full ${on ? "bg-white" : "bg-[#494745]"}`} />
        {on ? "On" : "Off"}
      </span>
    </label>
  );
}

function Visualizations({ selected }: { selected: boolean }) {
  return (
    <section className={`flex shrink-0 flex-col border-l border-[#e1dfdd] bg-[#f3f2f1] ${selected ? "w-[129px]" : "w-[130px]"}`}>
      <div className="flex h-[27px] items-center justify-between pr-px pl-[5px]">
        <h2 className="text-[10px] font-bold">Visualizations</h2>
        <Expand label="Collapse visualizations" />
      </div>
      <h3 className="h-[14px] pl-[5px] text-[8px] leading-[12px] font-semibold">Build visual</h3>
      <VizTabs selected={selected} />
      <div className="grid auto-rows-[20px] grid-cols-6 border-b border-[#d2d0ce] px-[4px] pt-[4px] pb-[4px]">
        {vizIcons.map(([name, art], i) => (
          <button
            key={name}
            type="button"
            title={name}
            className={`flex size-[18px] items-center justify-center self-center justify-self-center ${selected && i === 1 ? "border border-[#494745]" : ""}`}
          >
            {typeof art === "string" ? (
              <span className="text-[11px] font-bold text-[#2b7cb3]">{art}</span>
            ) : (
              <Svg box={16} className="size-[14px]" sw={1}>{art}</Svg>
            )}
          </button>
        ))}
      </div>
      {selected ? (
        <div className="flex">
          <div className="flex-1 pt-[4px] pr-px pl-[3px]">
            <Well title="X-axis" fields={["Region", "Picture"]} tail />
            <Well title="Y-axis" fields={["Sum of Cost_per_box"]} />
            <Well title="Legend" fields={["Category"]} />
          </div>
          <div className="h-[77px] w-[4px] bg-[#c8c6c4]" />
        </div>
      ) : (
        <div className="pt-[4px] pr-[4px] pl-[3px] text-[8px]">
          <h3 className="pl-[5px] leading-[14px]">Values</h3>
          <div className="mt-[3px] border border-dotted border-[#c8c6c4] bg-white pl-[6px] leading-[17px]">Add data fields here</div>
          <h3 className="mt-[8px] mb-px pl-[5px] leading-[14px] font-semibold">Drill through</h3>
          <Toggle label="Cross-report" initial={false} />
          <Toggle label="Keep all filters" initial />
          <div className="mt-[4px] border border-dotted border-[#c8c6c4] bg-white pl-[5px] leading-[17px] whitespace-nowrap">
            Add drill-through fields here
          </div>
        </div>
      )}
    </section>
  );
}

/* ---------- data ---------- */

type Field = { name: string; kind?: "table" | "sum" | "date"; open?: boolean; used?: boolean };
const fields: Field[] = [
  { name: "Picture", used: true },
  { name: "Sales_person" },
  { name: "SPID" },
  { name: "Team" },
  { name: "products", kind: "table", open: true, used: true },
  { name: "Category", used: true },
  { name: "Cost_per_box", kind: "sum", used: true },
  { name: "PID" },
  { name: "Product" },
  { name: "Shipments", kind: "table", open: true },
  { name: "Amount", kind: "sum" },
  { name: "Boxes", kind: "sum" },
  { name: "GID" },
  { name: "Order_Status" },
  { name: "PID" },
  { name: "Shipdate", kind: "date" },
  { name: "ShipmentID" },
  { name: "SPID" },
  { name: "shipments (2)", kind: "table" },
];

function FieldRow({ field, used }: { field: Field; used: boolean }) {
  if (field.kind === "table") {
    const Chevron = field.open ? ChevronDown : ChevronRight;
    return (
      <div className="flex items-center pl-[7px]">
        <Chevron className="size-[13px] shrink-0 text-[#605e5c]" strokeWidth={1.6} />
        <span className="relative mr-[4px]">
          <Svg box={16} className="size-[10px]" sw={1.6}>
            <path d="M2 2h12v12H2zM1 6h14M1 11h14M5.500 1v14M10.500 1v14" stroke="#494745" />
          </Svg>
          {used && (
            <svg viewBox="0 0 8 8" className="absolute top-[4px] left-[5px] size-[8px]" aria-hidden="true">
              <circle cx="4" cy="4" r="4" fill="#117865" />
              <path d="M2 4l1.500 1.500L6 3" fill="none" stroke="#fff" />
            </svg>
          )}
        </span>
        {field.name}
      </div>
    );
  }
  return (
    <label className="flex items-center pl-[18px]">
      <span className="flex w-[14px] shrink-0 items-center">
        {field.kind === "date" && <ChevronRight className="size-[13px] text-[#605e5c]" strokeWidth={1.6} />}
      </span>
      <span className="relative size-[9px] shrink-0">
        <input
          type="checkbox"
          defaultChecked={used}
          className="peer block size-[9px] appearance-none rounded-xs border border-[#8a8886] bg-[#f8f8f8] checked:border-[#117865] checked:bg-[#117865]"
        />
        <svg viewBox="0 0 9 9" className="pointer-events-none absolute inset-0 hidden size-[9px] peer-checked:block" aria-hidden="true">
          <path d="M2 4.500l2 2 3.500-4" fill="none" stroke="#fff" strokeWidth="1.200" />
        </svg>
      </span>
      <span className="mr-[4px] ml-[5px] flex w-[9px] shrink-0 justify-center">
        {field.kind === "sum" && (
          <Svg box={16} className="size-[10px]" sw={1.4}>
            <path d="M14 4V2H2l6 6-6 6h12v-2" />
          </Svg>
        )}
        {field.kind === "date" && (
          <Svg box={16} className="size-[10px]" sw={1.4}>
            <rect x="1.500" y="2" width="13" height="12" rx="1" />
            <path d="M1 5.500h14M5 8.500h6M5 11h6" />
          </Svg>
        )}
      </span>
      {field.name}
    </label>
  );
}

function DataPane({ selected }: { selected: boolean }) {
  return (
    <section className="flex w-[131px] shrink-0 flex-col border-l border-[#e1dfdd] bg-[#f3f2f1]">
      <div className="flex h-[27px] items-center justify-between pr-[2px] pl-[6px]">
        <h2 className="text-[10px] font-bold">Data</h2>
        <Expand label="Collapse data" />
      </div>
      <div className="relative pt-[5px] pr-[4px] pl-[4px]">
        <label className="flex h-[17px] items-center rounded-sm border border-[#d2d0ce] border-b-[#797775] bg-white px-[7px]">
          <Search className="size-[11px] text-[#797775]" strokeWidth={1.8} />
          <input aria-label="Search data" placeholder="Search" className="ml-[5px] w-full min-w-0 text-[8px] outline-none placeholder:text-[#797775]" />
        </label>
        {selected && <div className="absolute top-[27px] left-[30px] h-px w-[4px] bg-[#117865]" />}
      </div>
      <div className="flex pt-[7px] pb-[6px]">
        <div className="grid h-[329px] flex-1 grid-rows-[repeat(19,1fr)] text-[8px]">
          {fields.map((f, i) => (
            <FieldRow key={i} field={f} used={selected && !!f.used} />
          ))}
        </div>
        <div className="mr-[2px] h-[118px] w-[6px] shrink-0 self-end bg-[#c8c6c4]" />
      </div>
    </section>
  );
}

/* ---------- bottom bars ---------- */

function PageTabs() {
  return (
    <div className="flex h-[25px] shrink-0 bg-[#f3f2f1]">
      <div className="flex w-[92px] items-start pl-[6px]">
        <button type="button" aria-label="Desktop layout" className="flex h-[22px] w-[18px] items-center justify-center border-b-2 border-[#117865]">
          <Svg box={16} className="size-[16px]">
            <path d="M1 3h14v8H1zM5 13.500h6M8 11v2" stroke="#494745" />
          </Svg>
        </button>
        <button type="button" aria-label="Mobile layout" className="ml-[15px] flex h-[22px] w-[16px] items-center justify-center">
          <Svg box={16} className="size-[16px]">
            <path d="M3.500 1h9v14h-9zM7 13h2" stroke="#494745" />
          </Svg>
        </button>
        <button type="button" aria-label="Previous page" className="mt-[9px] ml-[10px] text-[#b3b0ad]">
          <ChevronRight className="size-[8px] rotate-180" strokeWidth={3} />
        </button>
        <button type="button" aria-label="Next page" className="mt-[9px] ml-[7px] text-[#b3b0ad]">
          <ChevronRight className="size-[8px]" strokeWidth={3} />
        </button>
      </div>
      <button type="button" className="w-[55px] border-b-2 border-l border-b-[#117865] border-l-[#b3b0ad] bg-white pt-[4px] text-[8px] font-semibold">
        Page 1
      </button>
      <button type="button" aria-label="New page" className="flex w-[28px] items-center justify-center bg-[#117865] text-white">
        <Plus className="size-[11px]" strokeWidth={5} />
      </button>
    </div>
  );
}

function StatusBar() {
  return (
    <footer className="flex h-[11px] items-start overflow-hidden border-t border-[#e1dfdd] bg-[#f3f2f1] text-[8px] leading-[16px] text-[#494745]">
      <span className="pl-px">Page 1 of 1</span>
      <span className="flex-1" />
      <span className="mr-[4px]">-</span>
      <input
        type="range"
        aria-label="Zoom"
        min={0}
        max={100}
        defaultValue={26}
        className="mt-[8px] h-px w-[72px] appearance-none bg-[#797775] [&::-webkit-slider-thumb]:h-[7px] [&::-webkit-slider-thumb]:w-[3px] [&::-webkit-slider-thumb]:appearance-none [&::-webkit-slider-thumb]:bg-[#494745]"
      />
      <span className="ml-[4px]">+</span>
      <span className="ml-[9px]">60%</span>
      <Svg box={16} className="mt-[3px] mr-[13px] ml-[14px] size-[12px]" sw={1.3}>
        <path d="M1 6V2h4M11 2h4v4M1 10v4h4M11 14h4v-4M4 5h8v6H4z" />
      </Svg>
    </footer>
  );
}

function ReportWindow({ selected }: { selected: boolean }) {
  return (
    <section className="overflow-hidden bg-[#f3f2f1]">
      <Ribbon selected={selected} />
      <div className="flex">
        <Rail selected={selected} />
        <div className="flex min-w-0 flex-1 flex-col">
          <div className="flex flex-1">
            {selected ? <ChartCanvas /> : <TableCanvas />}
            <Filters selected={selected} />
          </div>
          <PageTabs />
        </div>
        <Visualizations selected={selected} />
        <DataPane selected={selected} />
      </div>
      <StatusBar />
    </section>
  );
}

export default function App() {
  return (
    <main className="flex min-h-screen flex-col gap-[14px] bg-white pt-5 pr-[21px] pb-5 pl-5 font-['Open_Sans','Noto_Sans',sans-serif] text-[#252423]">
      <ReportWindow selected={false} />
      <ReportWindow selected />
    </main>
  );
}
